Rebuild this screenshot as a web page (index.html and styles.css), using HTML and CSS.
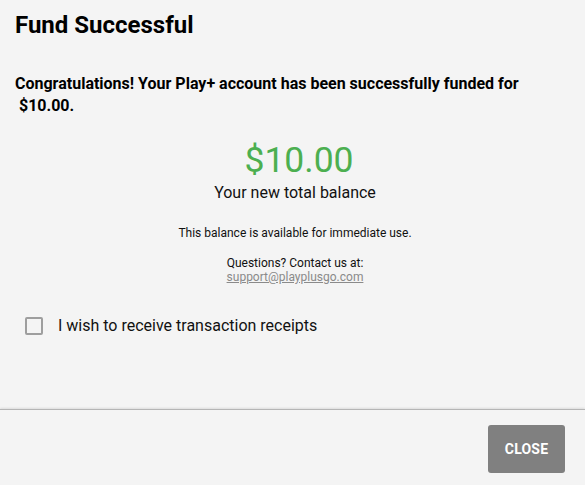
FILE: index.html
```html
<!DOCTYPE html>
<html lang="en">
<head>
<meta charset="utf-8">
<title>Fund Successful</title>
<link rel="stylesheet" href="styles.css">
</head>
<body>
<div class="dialog">
  <div class="content">
    <h1 class="title">Fund Successful</h1>
    <p class="congrats">Congratulations! Your Play+ account has been successfully funded for &nbsp;$10.00.</p>
    <div class="summary">
      <div class="amount">$10.00</div>
      <div class="amount-label">Your new total balance</div>
      <p class="note">This balance is available for immediate use.</p>
      <p class="contact">Questions? Contact us at:<br><a class="email" href="#">support@playplusgo.com</a></p>
    </div>
    <label class="receipt">
      <span class="box"></span>
      <span class="receipt-text">I wish to receive transaction receipts</span>
    </label>
  </div>
  <div class="footer">
    <button class="close-btn" type="button">CLOSE</button>
  </div>
</div>
</body>
</html>
```

FILE: styles.css
```css
html, body {
  margin: 0;
  padding: 0;
  height: 100%;
}
body {
  background: #f4f4f4;
  font-family: Roboto, "Liberation Sans", Arial, sans-serif;
  color: #111;
}
.dialog {
  display: flex;
  flex-direction: column;
  height: 100vh;
}
.content {
  flex: 1;
  padding: 11px 10px 0 15px;
}
.title {
  margin: 0;
  font-size: 24px;
  line-height: 28px;
  font-weight: 700;
  color: #000;
}
.congrats {
  margin: 34px 0 0;
  font-size: 16px;
  line-height: 22px;
  font-weight: 700;
  color: #000;
}
.summary {
  display: flex;
  flex-direction: column;
  align-items: center;
  text-align: center;
}
.amount {
  margin-top: 23px;
  padding-left: 8px;
  font-size: 35.5px;
  line-height: 40px;
  color: #4caf50;
}
.amount-label {
  margin-top: 3px;
  font-size: 16px;
  line-height: 20px;
  color: #111;
}
.note {
  margin: 22px 0 0;
  font-size: 12px;
  line-height: 16px;
}
.contact {
  margin: 15px 0 0;
  font-size: 12px;
  line-height: 14px;
}
.email {
  color: #8a8a8a;
  text-decoration: underline;
}
.receipt {
  display: flex;
  align-items: center;
  gap: 15px;
  margin: 32px 0 0 10px;
}
.box {
  width: 14px;
  height: 14px;
  border: 2px solid #9e9e9e;
  border-radius: 2px;
  flex: none;
}
.receipt-text {
  font-size: 16px;
  line-height: 20px;
  color: #111;
}
.footer {
  display: flex;
  justify-content: flex-end;
  border-top: 1px solid #b5b5b5;
  box-shadow: 0 -1px 2px rgba(0, 0, 0, 0.1);
  padding: 15px 20px 12px;
}
.close-btn {
  width: 77px;
  height: 48px;
  border: none;
  border-radius: 3px;
  background: #808080;
  color: #fff;
  font-family: Roboto, "Liberation Sans", Arial, sans-serif;
  font-size: 14px;
  font-weight: 700;
  letter-spacing: 0.2px;
}
```
